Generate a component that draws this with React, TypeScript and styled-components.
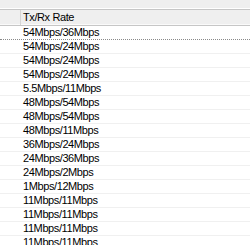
import React from "react";
import styled, { createGlobalStyle } from "styled-components";

const Global = createGlobalStyle`
  html, body { margin: 0; padding: 0; background: #ffffff; overflow: hidden; }
  body { font-family: "Liberation Sans", Arial, sans-serif; }
`;

const Frame = styled.div`
  width: 250px;
  height: 245px;
  overflow: hidden;
  background: #ffffff;
  display: flex;
  flex-direction: column;
`;

const TopBand = styled.div`
  flex: 0 0 10px;
  background: linear-gradient(#efefef 0 8px, #ffffff 8px 9px, #c6c6c6 9px 10px);
`;

const Header = styled.div`
  flex: 0 0 15px;
  display: grid;
  grid-template-columns: 21px 1fr;
  background: #efefef;
  border-bottom: 1px solid #c6c6c6;
  box-shadow: inset 0 -1px 0 #fafafa;
`;

const HeaderCell = styled.div<{ $sep?: boolean }>`
  border-right: ${(p) => (p.$sep ? "1px solid #d6d6d6" : "none")};
  padding: 1px 0 0 2px;
  font-size: 11px;
  line-height: 13px;
  letter-spacing: -0.4px;
  color: #000000;
  white-space: nowrap;
`;

const Row = styled.div<{ $focus?: boolean }>`
  flex: 0 0 14px;
  box-sizing: border-box;
  display: grid;
  grid-template-columns: 21px 1fr;
  border-bottom: 1px ${(p) => (p.$focus ? "dotted #8a8a8a" : "solid #f0f0f0")};
`;

const Cell = styled.div`
  padding-left: 2px;
  font-size: 11px;
  line-height: 13px;
  letter-spacing: -0.4px;
  color: #000000;
  white-space: nowrap;
`;

const rates = [
  "54Mbps/36Mbps",
  "54Mbps/24Mbps",
  "54Mbps/24Mbps",
  "54Mbps/24Mbps",
  "5.5Mbps/11Mbps",
  "48Mbps/54Mbps",
  "48Mbps/54Mbps",
  "48Mbps/11Mbps",
  "36Mbps/24Mbps",
  "24Mbps/36Mbps",
  "24Mbps/2Mbps",
  "1Mbps/12Mbps",
  "11Mbps/11Mbps",
  "11Mbps/11Mbps",
  "11Mbps/11Mbps",
  "11Mbps/11Mbps",
];

export default function App() {
  return (
    <>
      <Global />
      <Frame>
        <TopBand />
        <Header>
          <HeaderCell $sep />
          <HeaderCell>Tx/Rx Rate</HeaderCell>
        </Header>
        {rates.map((r, i) => (
          <Row key={i} $focus={i === 0}>
            <Cell />
            <Cell>{r}</Cell>
          </Row>
        ))}
      </Frame>
    </>
  );
}
